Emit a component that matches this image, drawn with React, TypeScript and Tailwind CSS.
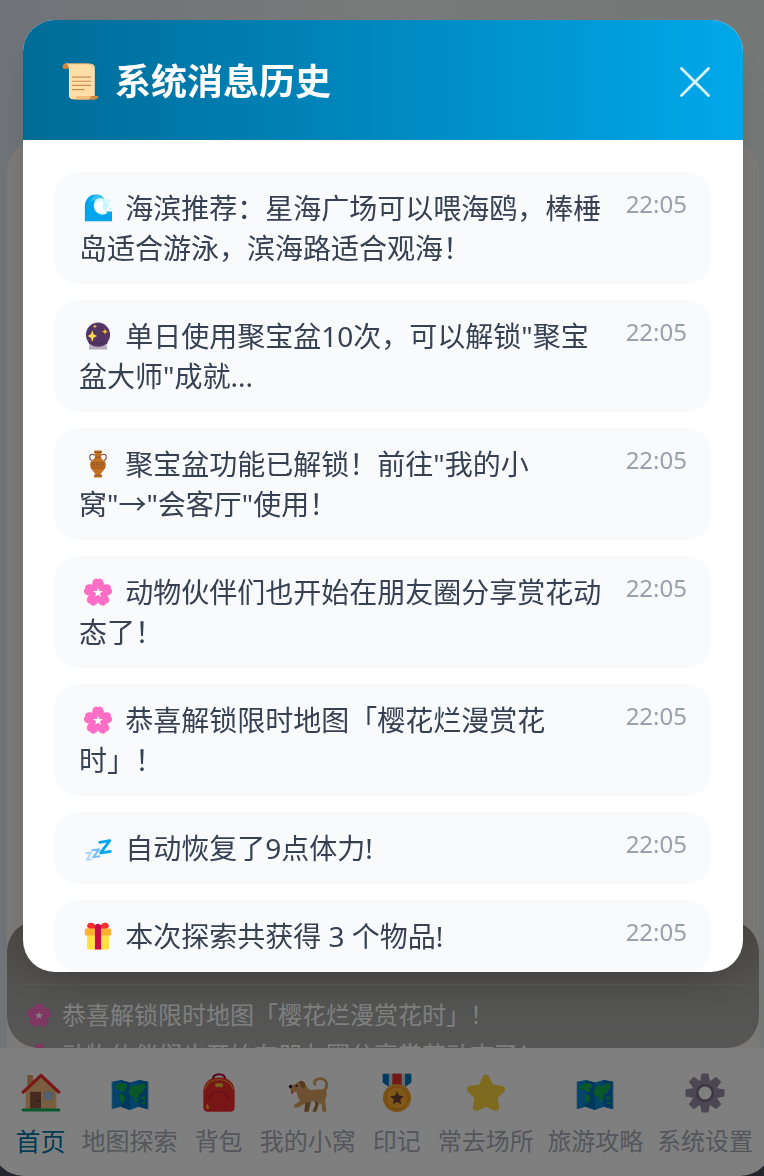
import React from "react";

type IconProps = { className?: string };

const svgProps = { viewBox: "0 0 32 32", fill: "none", "aria-hidden": true } as const;

function ScrollIcon({ className }: IconProps) {
  return (
    <svg {...svgProps} className={className}>
      <path d="M0.5 3.2C0.5 1.4 1.6 0.6 3.2 0.6H7V5H1.6C0.9 4.6 0.5 4 0.5 3.2Z" fill="#D3883E" />
      <path d="M3 .6H24.6C27 .6 28.4 2 28.4 4.4V31.4H9.6C7.4 31.4 6 30 6 27.8V4.6C6 2.2 5 .8 3 .6Z" fill="#FFDEA7" />
      <path d="M3 .6H21C24 .6 26 1.4 27 3.6" stroke="#E2A964" strokeWidth=".8" />
      <path d="M9 12.2H25M9 15.8H25M9 19.4H25M9 23H19" stroke="#C98E50" strokeWidth="1" strokeLinecap="round" />
      <path d="M12.8 28.5H31.5C31.5 30.4 30 31.5 28 31.5H9.6C11.8 31.5 12.8 30.4 12.8 28.5Z" fill="#D3883E" />
      <path d="M9.6 31.5C11.8 31.5 12.8 30.4 12.8 28.5H25C25 30.4 24 31.5 22 31.5Z" fill="#F2BE78" />
    </svg>
  );
}

function WaveIcon({ className }: IconProps) {
  return (
    <svg {...svgProps} className={className}>
      <path d="M1 31V13.500C1 6 6.500 .5 14 .5C18.500 .5 21.500 2.500 23 6L20 20H32V31Z" fill="#00A6ED" />
      <path d="M14 1C19 .5 22 3 22.500 6.500L15 9C12 6 9 7 7 10C8 5 10.500 2 14 1Z" fill="#3CC1F2" />
      <path d="M13 7C16 4 21 3.500 24 6.500L27 5.500L26 9L29 9.500L27.500 12L30.500 14L26.500 15L25 20L27 21.500C23 25 17 24 13.500 20C10.500 16 10.500 10.500 13 7Z" fill="#CFF6FF" />
      <path d="M14.500 10C17 7 21 7.500 22.500 10.500C20 12 20.500 18 25 20C22 23 16.500 22.500 14 19C12 16.500 12.500 12.500 14.500 10Z" fill="#fff" />
      <circle cx="29" cy="7.500" r="1.200" fill="#AEEFFF" />
      <circle cx="30" cy="17" r="1" fill="#AEEFFF" />
    </svg>
  );
}

function CrystalBallIcon({ className }: IconProps) {
  return (
    <svg {...svgProps} className={className}>
      <path d="M6.500 23H25.500L26.500 31.500H5.500Z" fill="#B4ACBC" />
      <circle cx="16" cy="14.500" r="13.800" fill="#533566" />
      <path d="M4.500 23H27.500L25.500 25.500H6.500Z" fill="#493158" />
      <path d="M9.500 9.500L11 14L15 16L11 18L9.500 22.500L7.800 18L4 16L7.800 14Z" fill="#FFD748" />
      <path d="M12.500 2.500L13.200 4.300L15 5L13.200 5.700L12.500 7.500L11.800 5.700L10 5L11.800 4.300Z" fill="#FCC32E" />
      <path d="M24 7.500L24.900 10.100L27.500 11L24.900 11.900L24 14.500L23.100 11.900L20.500 11L23.100 10.100Z" fill="#FCC32E" />
    </svg>
  );
}

function AmphoraIcon({ className }: IconProps) {
  return (
    <svg {...svgProps} className={className}>
      <path d="M12.500 6C9 3.500 6 5.500 6.500 9C7 11.500 9.500 12 10.500 14.500M19.500 6C23 3.500 26 5.500 25.500 9C25 11.500 22.500 12 21.500 14.500" stroke="#7D4533" strokeWidth="1.300" />
      <path d="M11.500 .5H20.500V3H19.500V8C19.500 11 25 12.500 25 17C25 22 19.500 25 18.800 28.500H20.500V31.500H11.500V28.500H13.200C12.500 25 7 22 7 17C7 12.500 12.500 11 12.500 8V3H11.500Z" fill="#C27022" />
      <path d="M11.500 2.500H20.500M12.800 8.500H19.200M11.500 29H20.500" stroke="#8C4B2A" strokeWidth="1" />
      <path d="M7.600 14.500H24.400M7.800 20.500H24.200" stroke="#8C4B2A" strokeWidth=".8" />
      <path d="M9 19V16H12V18H10.800M14 19V16H17V18H15.800M19 19V16H22V18H20.800" stroke="#8C4B2A" strokeWidth=".8" />
    </svg>
  );
}

function BlossomIcon({ className }: IconProps) {
  return (
    <svg {...svgProps} className={className}>
      <g fill="#FF6DC6">
        {[0, 72, 144, 216, 288].map((a) => (
          <path key={a} transform={`rotate(${a} 16 16.800)`} d="M16 19C10.500 15 8.800 9.500 9.600 5C10.200 2.200 12 .8 14.200 .6L16 1.700L17.800 .6C20 .8 21.800 2.200 22.400 5C23.200 9.500 21.500 15 16 19Z" />
        ))}
      </g>
      <circle cx="16" cy="16.800" r="8" fill="#FF6DC6" />
      <path d="M16 10.500L17.200 14.900L21.800 14.800L18.100 17.400L19.600 21.700L16 19.100L12.400 21.700L13.900 17.400L10.200 14.800L14.800 14.900Z" fill="#fff" />
    </svg>
  );
}

function ZzzIcon({ className }: IconProps) {
  return (
    <svg {...svgProps} className={className} strokeLinejoin="round" strokeLinecap="round">
      <path d="M2.500 22L8 21L3.500 29.500L8.500 29" stroke="#AFD8FF" strokeWidth="2.200" />
      <path d="M9.500 18.500L17.500 17.500L10.500 26.500L17.500 25.500" stroke="#75BFFB" strokeWidth="2.400" />
      <path d="M18 9.500L29.500 7.500L19 21.500L30 20" stroke="#00A6ED" strokeWidth="3.200" />
    </svg>
  );
}

function GiftIcon({ className }: IconProps) {
  return (
    <svg {...svgProps} className={className}>
      <path d="M16 9C13 9 3.500 9 3.500 4.500C3.500 .2 9.500 -.6 12.500 3L16 6L19.500 3C22.500 -.6 28.500 .2 28.500 4.500C28.500 9 19 9 16 9Z" fill="#F8312F" />
      <path d="M3.500 14H28.500V29.500C28.500 30.600 27.800 31.500 26.500 31.500H5.500C4.200 31.500 3.500 30.600 3.500 29.500Z" fill="#FFDF3D" />
      <rect x="1" y="7.500" width="30" height="8" rx="1.500" fill="#FFB02E" />
      <path d="M12.500 5.500C12.500 3 14 2 16 2C18 2 19.500 3 19.500 5.500V31.500H12.500Z" fill="#CA0B4A" />
    </svg>
  );
}

function HouseIcon({ className }: IconProps) {
  return (
    <svg {...svgProps} className={className}>
      <path d="M5 2.500C5 1.800 5.300 1.500 6 1.500H8.700C9.400 1.500 9.700 1.800 9.700 2.500V10H5Z" fill="#E0A566" />
      <path d="M3.700 14L16 2.500L28.300 14V29.500H3.700Z" fill="#F3BE80" />
      <path d="M1.700 15.300L16 2L30.300 15.300" stroke="#F32F2D" strokeWidth="2.600" strokeLinecap="round" strokeLinejoin="round" />
      <path d="M7.300 15H16V28.500H7.300Z" fill="#8C5543" />
      <circle cx="14" cy="22.500" r=".7" fill="#402A32" />
      <rect x="18.500" y="15" width="6.500" height="6.500" fill="#9CC5F5" stroke="#B9A6A0" strokeWidth=".6" />
      <rect x=".5" y="28.300" width="31" height="2.400" rx="1.200" fill="#15B05B" />
    </svg>
  );
}

function MapIcon({ className }: IconProps) {
  return (
    <svg {...svgProps} className={className}>
      <path d="M1.500 7L8.500 5.500L16 7.500L23 5.500L30.500 7V29L23 27L16 29.500L8.500 27L1.500 29Z" fill="#0886D4" />
      <path d="M8.500 5.500L16 7.500V29.500L8.500 27ZM23 5.500L30.500 7V29L23 27Z" fill="#0671BC" />
      <g fill="#12B04F">
        <path d="M4 10.500L8 8.200L13 8.700L14 11L12 12.500L11 15.500L8.500 14.500L7 12.500L4 13.500Z" />
        <path d="M8 16.500L11.500 18L12 20.500L10 25L8.500 22.500L7.800 19.500Z" />
        <path d="M16 11.500L19 9.500L22 10.500L25 8L28.500 9.500L28 12.500L26 13.500L26.500 16.500L24 15.500L22.500 19.500L21.500 23.500L19.500 22L19 18.500L16 18L15 15.500Z" />
        <path d="M25 19H28V21H25ZM25.500 23H28V25L25.500 24.500Z" />
      </g>
      <path d="M1.500 7V29M30.500 7V29" stroke="#9CC4D8" strokeWidth=".6" />
    </svg>
  );
}

function BackpackIcon({ className }: IconProps) {
  return (
    <svg {...svgProps} className={className}>
      <path d="M11 5.500C11 2.500 13 1 16 1C19 1 21 2.500 21 5.500" stroke="#B00C41" strokeWidth="1.700" />
      <path d="M3.500 15C3.500 7.500 8.500 3.500 16 3.500C23.500 3.500 28.500 7.500 28.500 15V27.500C28.500 29.800 27 31 25 31H7C5 31 3.500 29.800 3.500 27.500Z" fill="#F02C2A" />
      <path d="M5 13C6.500 2.800 25.500 2.800 27 13" stroke="#F59A2B" strokeWidth="1" />
      <path d="M8 21C9 16.500 12 15 16 15C20 15 23 16.500 24 21" stroke="#BE1A35" strokeWidth=".9" />
      <rect x="12.800" y="8" width="6.500" height="3.300" rx="1" fill="#FFC23E" stroke="#B4572A" strokeWidth=".5" />
      <path d="M6.500 24.500C5.400 26.500 5.200 28.700 7 28.700C8.600 28.700 8.200 26.500 6.500 24.500Z" fill="#FFB02E" />
    </svg>
  );
}

function DogIcon({ className }: IconProps) {
  return (
    <svg {...svgProps} className={className}>
      <path d="M14 21L13 31H16.500L18.500 22ZM20.500 21L22 25L19.500 31H22.500L25 24Z" fill="#A9723A" />
      <path d="M28.500 15C32.500 11 31.500 4.500 26 4.500C22.500 4.500 20.500 6.500 21.500 9" stroke="#DDA262" strokeWidth="2.300" strokeLinecap="round" />
      <path d="M1.800 10L6.500 8.500C8 6.500 11 6 13 7.500C14.500 10 15.500 12.500 18 13.500L27 13C30 13 31.300 15 31 18L29.700 21.500L30.800 31H27.500L26.800 25L22.500 22L15 23.500L12.500 25L8 27.500H5V25.500L10 22C7.500 20 7.500 17.500 7.200 15.500L3 14.500C1 13.200 .8 11.300 1.800 10Z" fill="#DDA262" />
      <path d="M9 6.700C11.500 5.800 14 7 13.700 10.500C13.500 12.500 11 12.500 10.300 10.500Z" fill="#A9723A" />
      <circle cx="2" cy="10.800" r="1.400" fill="#2D222A" />
      <circle cx="6.800" cy="10.300" r=".9" fill="#2D222A" />
      <path d="M2.500 14L4.500 14.500L3.800 17C2.600 17 2.300 15.500 2.500 14Z" fill="#F2434C" />
    </svg>
  );
}

function MedalIcon({ className }: IconProps) {
  return (
    <svg {...svgProps} className={className}>
      <path d="M5 .5H27V7.500L22 11.500H10L5 7.500Z" fill="#C9D8E6" />
      <path d="M4.500 .5H9.500V11L4.500 7.500ZM22.500 .5H27.500V7.500L22.500 11Z" fill="#0074BA" />
      <path d="M12.300 .5H19.700V11H12.300Z" fill="#E8302E" />
      <circle cx="16" cy="20" r="11.200" fill="#F4A22D" />
      <circle cx="16" cy="20" r="8.900" fill="#FFB02E" stroke="#D9822B" strokeWidth=".6" />
      <path d="M16 14.500L17.600 18L21.500 18.500L18.600 21.200L19.400 25L16 23.100L12.600 25L13.400 21.200L10.500 18.500L14.400 18Z" fill="#6D4534" />
    </svg>
  );
}

function StarIcon({ className }: IconProps) {
  return (
    <svg {...svgProps} className={className}>
      <path d="M13.400 3C14.400 .9 17.600 .9 18.600 3L21.400 9.200L28.500 10.100C31.200 10.400 32.200 13.400 30.300 15.200L25.400 19.900L26.500 26.700C27 29.300 24.400 31.100 22.200 29.900L16 27L9.800 29.900C7.600 31.100 5 29.300 5.500 26.700L6.600 19.900L1.700 15.200C-.2 13.400 .8 10.400 3.500 10.100L10.600 9.200Z" fill="#FCD53F" />
    </svg>
  );
}

function GearIcon({ className }: IconProps) {
  return (
    <svg {...svgProps} className={className}>
      <g fill="#998EA4">
        {[0, 45, 90, 135].map((a) => (
          <path key={a} transform={`rotate(${a} 16 16)`} d="M13 1.500C13 .8 13.400 .4 14 .4H18C18.600 .4 19 .8 19 1.500L20 7V25L19 30.500C19 31.200 18.600 31.600 18 31.600H14C13.400 31.600 13 31.200 13 30.500L12 25V7Z" />
        ))}
        <circle cx="16" cy="16" r="10.500" />
      </g>
      <circle cx="16" cy="16" r="7.300" fill="#7B6E86" />
      <circle cx="16" cy="16" r="5.200" fill="#FFFFFF" />
    </svg>
  );
}

type Message = { icon: (p: IconProps) => React.JSX.Element; text: string; time: string };

const messages: Message[] = [
  { icon: WaveIcon, text: "海滨推荐：星海广场可以喂海鸥，棒棰岛适合游泳，滨海路适合观海！", time: "22:05" },
  { icon: CrystalBallIcon, text: '单日使用聚宝盆10次，可以解锁"聚宝盆大师"成就...', time: "22:05" },
  { icon: AmphoraIcon, text: '聚宝盆功能已解锁！前往"我的小窝"→"会客厅"使用！', time: "22:05" },
  { icon: BlossomIcon, text: "动物伙伴们也开始在朋友圈分享赏花动态了！", time: "22:05" },
  { icon: BlossomIcon, text: "恭喜解锁限时地图「樱花烂漫赏花时」！", time: "22:05" },
  { icon: ZzzIcon, text: "自动恢复了9点体力!", time: "22:05" },
  { icon: GiftIcon, text: "本次探索共获得 3 个物品!", time: "22:05" },
];

const logLines = ["恭喜解锁限时地图「樱花烂漫赏花时」！", "动物伙伴们也开始在朋友圈分享赏花动态了！"];

const tabs = [
  { icon: HouseIcon, label: "首页", active: true },
  { icon: MapIcon, label: "地图探索" },
  { icon: BackpackIcon, label: "背包" },
  { icon: DogIcon, label: "我的小窝" },
  { icon: MedalIcon, label: "印记" },
  { icon: StarIcon, label: "常去场所" },
  { icon: MapIcon, label: "旅游攻略" },
  { icon: GearIcon, label: "系统设置" },
];

function HomePage() {
  return (
    <div className="flex h-screen flex-col overflow-hidden bg-[#464c58]">
      <main className="flex flex-1 flex-col bg-linear-to-r from-[#dfe8f1] via-[#f1f4f2] to-[#e8f0ee] pt-[140px] pr-[5px] pl-[7px]">
        <div className="flex flex-1 flex-col justify-end rounded-t-[32px] bg-[#f8f5f3]">
          <section className="flex h-32 flex-col overflow-hidden rounded-[32px] bg-linear-to-b from-[#978c7e] via-[#a6a6a4] to-[#adadad] px-4 pt-16">
            <ul className="border-t border-[#b2b2b2] pt-[10px] text-2xl leading-10 text-[#ffffff]">
              {logLines.map((line) => (
                <li key={line} className="flex items-center gap-[11px] whitespace-nowrap pl-1">
                  <BlossomIcon className="size-6 shrink-0" />
                  {line}
                </li>
              ))}
            </ul>
          </section>
        </div>
      </main>
      <nav className="-mx-2 flex h-32 shrink-0 justify-between rounded-b-[32px] bg-white pt-[25px] pr-[19px] pl-[21px]">
        {tabs.map(({ icon: Icon, label, active }) => (
          <button
            key={label}
            type="button"
            className={`flex min-w-[55px] flex-col items-center gap-2 whitespace-nowrap ${active ? "text-[25px] text-[#0077a8]" : "text-2xl text-[#a9adb8]"} leading-10`}
          >
            <Icon className="size-10 shrink-0" />
            {label}
          </button>
        ))}
      </nav>
    </div>
  );
}

function HistoryDialog() {
  return (
    <div className="fixed inset-0 flex items-start bg-black/50 pt-5 pr-[21px] pb-[204px] pl-[23px]">
      <div
        role="dialog"
        aria-modal="true"
        aria-labelledby="history-title"
        className="flex max-h-full w-full flex-col overflow-hidden rounded-[32px] bg-white shadow-[0_20px_40px_-16px_rgba(0,0,0,0.25)]"
      >
        <header className="flex h-[120px] shrink-0 items-center justify-between bg-linear-to-r from-[#006b97] to-[#00a8ea] pt-[3px] pr-8 pl-[39px]">
          <h2 id="history-title" className="flex items-center gap-4 text-4xl font-bold text-white">
            <ScrollIcon className="size-[37px]" />
            系统消息历史
          </h2>
          <button type="button" aria-label="关闭" className="text-[#d9f3fd]">
            <svg {...svgProps} className="size-8">
              <path d="M2.500 2.500L29.500 29.500M29.500 2.500L2.500 29.500" stroke="currentColor" strokeWidth="2.800" strokeLinecap="round" />
            </svg>
          </button>
        </header>
        <ul className="flex min-h-0 flex-col gap-4 overflow-y-auto p-8 [scrollbar-width:none]">
          {messages.map(({ icon: Icon, text, time }) => (
            <li key={text} className="flex shrink-0 items-start justify-between gap-4 rounded-3xl bg-[#f8fafc] px-6 py-4">
              <p className="min-w-0 flex-1 text-[28px] leading-10 text-[#364153]">
                <Icon className="mr-[6px] ml-[5px] inline-block size-7 align-[-3px]" /> {text}
              </p>
              <time className="text-2xl leading-8 text-[#99a1af]">{time}</time>
            </li>
          ))}
        </ul>
      </div>
    </div>
  );
}

export default function App() {
  return (
    <div lang="zh-CN" className="font-['Noto_Sans','Noto_Sans_CJK_SC',sans-serif]">
      <HomePage />
      <HistoryDialog />
    </div>
  );
}
